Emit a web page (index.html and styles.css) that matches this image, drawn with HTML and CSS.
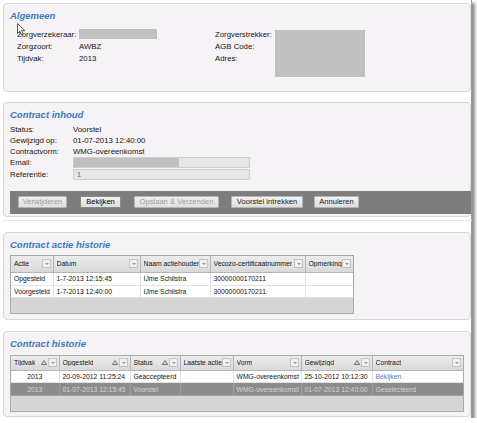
FILE: index.html
```html
<!DOCTYPE html>
<html>
<head>
<meta charset="utf-8">
<link rel="stylesheet" href="styles.css">
</head>
<body>
<div class="window">
  <section class="panel p1">
    <h2 class="title">Algemeen</h2>
    <div class="alg">
      <div class="alg-left">
        <div class="row"><span class="lbl">Zorgverzekeraar:</span><span class="redact r1"></span></div>
        <div class="row"><span class="lbl">Zorgzoort:</span><span>AWBZ</span></div>
        <div class="row"><span class="lbl">Tijdvak:</span><span>2013</span></div>
      </div>
      <div class="alg-right">
        <div class="lbls">
          <div class="row">Zorgverstrekker:</div>
          <div class="row">AGB Code:</div>
          <div class="row">Adres:</div>
        </div>
        <div class="redact r2"></div>
      </div>
    </div>
  </section>

  <section class="panel p2">
    <h2 class="title">Contract inhoud</h2>
    <div class="info">
      <div class="row"><span class="lbl">Status:</span><span>Voorstel</span></div>
      <div class="row"><span class="lbl">Gewijzigd op:</span><span>01-07-2013 12:40:00</span></div>
      <div class="row"><span class="lbl">Contractvorm:</span><span>WMG-overeenkomst</span></div>
      <div class="row"><span class="lbl">Email:</span><span class="field"><span class="redact r3"></span></span></div>
      <div class="row ref"><span class="lbl">Referentie:</span><span class="field">1</span></div>
    </div>
    <div class="bar">
      <button class="btn b1 disabled">Verwijderen</button>
      <button class="btn b2 focus">Bekijken</button>
      <button class="btn b3 disabled">Opslaan &amp; Verzenden</button>
      <button class="btn b4">Voorstel intrekken</button>
      <button class="btn b5">Annuleren</button>
    </div>
  </section>

  <div class="sep"></div>

  <section class="panel p3">
    <h2 class="title">Contract actie historie</h2>
    <div class="grid g1">
      <table>
        <colgroup>
          <col class="w43"><col class="w87"><col class="w70"><col class="w95"><col class="w49">
        </colgroup>
        <thead>
          <tr>
            <th><div class="hc"><span>Actie</span><span class="dd"></span></div></th>
            <th><div class="hc"><span>Datum</span><span class="dd"></span></div></th>
            <th><div class="hc"><span>Naam actiehouder</span><span class="dd"></span></div></th>
            <th><div class="hc"><span>Vecozo-certificaatnummer</span><span class="dd"></span></div></th>
            <th><div class="hc"><span>Opmerking</span><span class="dd"></span></div></th>
          </tr>
        </thead>
        <tbody>
          <tr class="r-a"><td>Opgesteld</td><td>1-7-2013 12:15:45</td><td>IJme Schilstra</td><td>30000000170211</td><td></td></tr>
          <tr class="r-b"><td>Voorgesteld</td><td>1-7-2013 12:40:00</td><td>IJme Schilstra</td><td>30000000170211</td><td></td></tr>
        </tbody>
      </table>
      <div class="foot"></div>
    </div>
  </section>

  <section class="panel p4">
    <h2 class="title">Contract historie</h2>
    <div class="grid g2">
      <table>
        <colgroup>
          <col class="w48"><col class="w71"><col class="w50"><col class="w53"><col class="w68"><col class="w71"><col class="w93">
        </colgroup>
        <thead>
          <tr>
            <th><div class="hc"><span>Tijdvak</span><span class="ic"><svg class="sort" width="6" height="5" viewBox="0 0 6 5"><path d="M3 0.6 L5.5 4.5 L0.5 4.5 Z" fill="none" stroke="#555" stroke-width="0.8"/></svg><span class="dd"></span></span></div></th>
            <th><div class="hc"><span>Opgesteld</span><span class="ic"><svg class="sort" width="6" height="5" viewBox="0 0 6 5"><path d="M3 0.6 L5.5 4.5 L0.5 4.5 Z" fill="none" stroke="#555" stroke-width="0.8"/></svg><span class="dd"></span></span></div></th>
            <th><div class="hc"><span>Status</span><span class="ic"><svg class="sort" width="6" height="5" viewBox="0 0 6 5"><path d="M3 0.6 L5.5 4.5 L0.5 4.5 Z" fill="none" stroke="#555" stroke-width="0.8"/></svg><span class="dd"></span></span></div></th>
            <th><div class="hc"><span>Laatste actie</span><span class="dd"></span></div></th>
            <th><div class="hc"><span>Vorm</span><span class="dd"></span></div></th>
            <th><div class="hc"><span>Gewijzigd</span><span class="ic"><svg class="sort" width="6" height="5" viewBox="0 0 6 5"><path d="M3 0.6 L5.5 4.5 L0.5 4.5 Z" fill="none" stroke="#555" stroke-width="0.8"/></svg><span class="dd"></span></span></div></th>
            <th><div class="hc"><span>Contract</span><span class="dd"></span></div></th>
          </tr>
        </thead>
        <tbody>
          <tr class="r-c"><td class="c">2013</td><td>20-09-2012 11:25:24</td><td>Geaccepteerd</td><td></td><td>WMG-overeenkomst</td><td>25-10-2012 10:12:30</td><td><span class="link">Bekijken</span></td></tr>
          <tr class="r-d sel"><td class="c">2013</td><td>01-07-2013 12:15:45</td><td>Voorstel</td><td></td><td>WMG-overeenkomst</td><td>01-07-2013 12:40:00</td><td>Geselecteerd</td></tr>
        </tbody>
      </table>
      <div class="foot"></div>
    </div>
  </section>

  <svg class="cursor" width="9" height="13" viewBox="0 0 9 13"><path d="M0.5 0.5 L0.5 10.5 L2.9 8.2 L4.6 12 L6.2 11.3 L4.6 7.6 L7.8 7.6 Z" fill="#fff" stroke="#444" stroke-width="0.9" stroke-linejoin="round"/></svg>
</div>
</body>
</html>
```

FILE: styles.css
```css
* { box-sizing: border-box; margin: 0; padding: 0; }

body {
  margin: 0;
  background: #fff;
  font-family: "Liberation Sans", Arial, sans-serif;
  font-size: 7.8px;
  color: #151515;
}

.window {
  position: relative;
  width: 472px;
  height: 418px;
  padding: 3px 0 0 3px;
  background: #fff;
  border-right: 1px solid #9a9a9a;
  box-shadow: 3px 3px 3px rgba(0, 0, 0, 0.45);
}

.panel {
  width: 468px;
  background: #f6f3f6;
  border: 1px solid #d8d4d8;
  border-radius: 4px;
  padding: 4px 6px 0 6px;
}

.title {
  font: italic bold 9.5px/16px "Liberation Sans", Arial, sans-serif;
  color: #3a78c0;
}

.row {
  display: flex;
  align-items: center;
  height: 12px;
  white-space: nowrap;
}

.redact { display: block; background: #c0c0c0; }

/* Algemeen */
.p1 { height: 89px; }
.alg { display: flex; margin-top: 4px; padding-left: 7px; }
.alg-left { width: 198px; }
.alg .lbl { width: 62px; }
.r1 { width: 78px; height: 10px; }
.alg-right { display: flex; }
.alg-right .lbls { width: 60px; }
.r2 { width: 90px; height: 47px; margin-top: 2px; }

/* Contract inhoud */
.p2 { margin-top: 10px; padding-bottom: 2px; }
.info { margin-top: 1px; }
.info .row { height: 11px; }
.info .row.ref { margin-top: 1px; }
.info .lbl { width: 63px; }
.field {
  display: flex;
  align-items: center;
  width: 177px;
  height: 11px;
  padding-left: 3px;
  background: #e6e6e6;
  border: 1px solid #cfcfcf;
  color: #777;
}
.field .r3 { width: 105px; height: 9px; margin-left: -3px; }

.bar {
  display: flex;
  align-items: center;
  height: 23px;
  margin: 11px -7px 0 0;
  padding: 0 0 1px 8px;
  background: #7d7d7d;
  gap: 12px;
}
.btn {
  height: 12px;
  font-family: "Liberation Sans", Arial, sans-serif;
  font-size: 7.6px;
  color: #222;
  background: linear-gradient(#f2f2f2, #dedede);
  border: 1px solid #b4b4b4;
  border-radius: 1px;
  white-space: nowrap;
  line-height: 10px;
}
.btn.disabled { color: #9c9c9c; background: linear-gradient(#eeeeee, #e0e0e0); }
.btn.focus { color: #000; border-color: #8a8a8a; }
.b1 { width: 49px; }
.b2 { width: 41px; margin-left: 1px; }
.b3 { width: 85px; margin-left: 1px; }
.b4 { width: 72px; }
.b5 { width: 45px; margin-left: -1px; }

.sep {
  width: 469px;
  height: 1px;
  margin-top: 3px;
  background: #e4e4e4;
}

/* grids */
.p3 { margin-top: 11px; padding-bottom: 5px; }
.p4 { margin-top: 11px; padding-bottom: 4px; }

.grid {
  border: 1px solid #a9a9a9;
  background: #fff;
  font-size: 6.8px;
}
.g1 { width: 344px; margin-top: 2px; }
.g2 { width: 454px; margin-top: 3px; }

table {
  width: 100%;
  table-layout: fixed;
  border-collapse: collapse;
}
.w43 { width: 42px; } .w87 { width: 87px; } .w70 { width: 70px; }
.w95 { width: 95px; } .w49 { width: 48px; }
.w48 { width: 48px; } .w71 { width: 71px; } .w50 { width: 50px; }
.w53 { width: 53px; } .w68 { width: 68px; } .w93 { width: 91px; }

th {
  font-weight: normal;
  text-align: left;
  padding: 0 2px 0 3px;
  background: linear-gradient(#ececec, #d9d9d9);
  border-right: 1px solid #b5b5b5;
  border-bottom: 1px solid #b5b5b5;
  white-space: nowrap;
  overflow: hidden;
}
th:last-child { border-right: none; }
.g1 th { height: 16px; }
.g2 th { height: 15px; }

.hc {
  display: flex;
  align-items: center;
  justify-content: space-between;
}
.hc > span:first-child { overflow: hidden; }
.ic { display: flex; align-items: center; gap: 1px; }
.sort { display: block; }

.dd {
  position: relative;
  flex: none;
  width: 9px;
  height: 9px;
  border: 1px solid #c4c4c4;
  background: #f0f0f0;
}
.dd::after {
  content: "";
  position: absolute;
  left: 2px;
  top: 3px;
  border-left: 2px solid transparent;
  border-right: 2px solid transparent;
  border-top: 2px solid #9a9a9a;
}

td {
  padding: 0 3px;
  color: #151515;
  border-right: 1px solid #e2e2e2;
  border-bottom: 1px solid #e2e2e2;
  white-space: nowrap;
  overflow: hidden;
}
td:last-child { border-right: none; }
td.c { text-align: center; }
.r-a td { height: 13px; }
.r-b td { height: 12px; }
.r-c td { height: 12px; }
.r-d td { height: 13px; }

tr.sel td {
  background: #8c8c8c;
  color: #d6d6d6;
  border-color: #9e9e9e;
}
.link { color: #4a7fc8; }

.foot {
  height: 15px;
  background: #d5d5d5;
}

.cursor {
  position: absolute;
  left: 17px;
  top: 23px;
}
```
